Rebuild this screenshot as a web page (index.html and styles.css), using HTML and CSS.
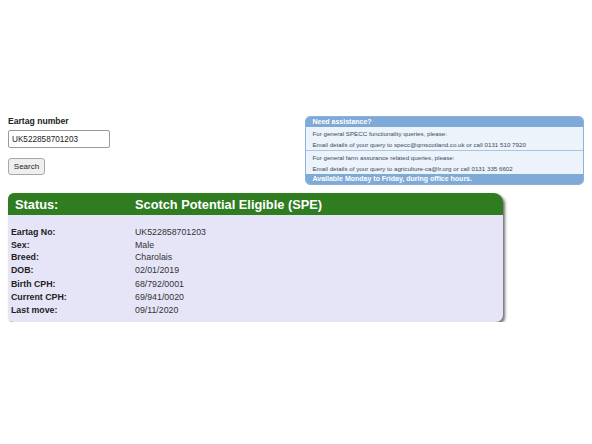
FILE: index.html
```html
<!DOCTYPE html>
<html>
<head>
<meta charset="utf-8">
<link rel="stylesheet" href="styles.css">
</head>
<body>
<div class="page">
  <div class="top">
    <form class="search">
      <label class="lbl">Eartag number</label>
      <input class="inp" type="text" value="UK522858701203">
      <button class="btn" type="button">Search</button>
    </form>
    <div class="help">
      <div class="help-head">Need assistance?</div>
      <div class="help-sec">
        <p>For general SPECC functionality queries, please:</p>
        <p>Email details of your query to specc@qmscotland.co.uk or call 0131 510 7920</p>
      </div>
      <div class="help-sec">
        <p>For general farm assurance related queries, please:</p>
        <p>Email details of your query to agriculture-ca@lr.org or call 0131 335 6602</p>
      </div>
      <div class="help-foot">Available Monday to Friday, during office hours.</div>
    </div>
  </div>
  <div class="card">
    <div class="card-head">
      <span class="k">Status:</span>
      <span class="v">Scotch Potential Eligible (SPE)</span>
    </div>
    <div class="card-body">
      <div class="row"><span class="k">Eartag No:</span><span class="v">UK522858701203</span></div>
      <div class="row"><span class="k">Sex:</span><span class="v">Male</span></div>
      <div class="row"><span class="k">Breed:</span><span class="v">Charolais</span></div>
      <div class="row"><span class="k">DOB:</span><span class="v">02/01/2019</span></div>
      <div class="row cph first"><span class="k">Birth CPH:</span><span class="v">68/792/0001</span></div>
      <div class="row cph"><span class="k">Current CPH:</span><span class="v">69/941/0020</span></div>
      <div class="row last"><span class="k">Last move:</span><span class="v">09/11/2020</span></div>
    </div>
  </div>
</div>
</body>
</html>
```
FILE: styles.css
```css
html, body {
  margin: 0;
  padding: 0;
  background: #ffffff;
}
body {
  font-family: "Liberation Sans", Arial, sans-serif;
  color: #222;
}
.page {
  padding: 113px 8px 0 8px;
}
.top {
  display: flex;
  align-items: flex-start;
}
.search {
  display: flex;
  flex-direction: column;
  align-items: flex-start;
  width: 298px;
  margin: 0;
}
.lbl {
  font-size: 8.6px;
  font-weight: bold;
  color: #222;
  line-height: 12px;
  margin-top: 2px;
}
.inp {
  margin-top: 3px;
  width: 102px;
  height: 18px;
  box-sizing: border-box;
  border: 1px solid #9a9a9a;
  border-radius: 2px;
  font-family: "Liberation Sans", Arial, sans-serif;
  font-size: 8.2px;
  padding: 0 3px;
  color: #222;
}
.btn {
  margin-top: 10px;
  width: 37px;
  height: 17px;
  box-sizing: border-box;
  border: 1px solid #a8a8a8;
  border-radius: 3px;
  background: #efefef;
  font-family: "Liberation Sans", Arial, sans-serif;
  font-size: 8px;
  padding: 0;
  color: #222;
}
.help {
  margin-top: 3px;
  width: 277px;
  border-radius: 5px;
  background: #ecf3fa;
  border: 1px solid #8db2d9;
  overflow: hidden;
  font-size: 6.2px;
  color: #3a4a5e;
}
.help-head {
  background: #7fa9d6;
  color: #fff;
  font-weight: bold;
  font-size: 7px;
  line-height: 10px;
  padding: 0 6px;
}
.help-sec {
  padding: 1px 6px 0 6px;
}
.help-sec + .help-sec {
  border-top: 1px solid #a6c4e4;
}
.help-sec p {
  margin: 0;
  line-height: 11px;
}
.help-foot {
  background: #7fa9d6;
  color: #fff;
  font-weight: bold;
  font-size: 7px;
  line-height: 10px;
  padding: 0 6px;
}
.card {
  margin-top: 8px;
  width: 495px;
  border-radius: 6px 9px 7px 6px;
  background: #e6e5f8;
  box-shadow: 2px 2px 3px #6e6e6e;
  overflow: hidden;
}
.card-head {
  display: flex;
  background: #307d21;
  color: #fff;
  font-weight: bold;
  font-size: 12.8px;
  height: 22px;
  align-items: center;
  padding-left: 7px;
}
.card-head .k {
  width: 120px;
}
.card-body {
  padding: 11px 0 5px 3px;
  font-size: 8.8px;
}
.row {
  display: flex;
  line-height: 12.5px;
}
.row .k {
  width: 124px;
  font-weight: bold;
  color: #222;
}
.row .v {
  color: #333;
}
.row.first {
  margin-top: 2px;
}
.row.last {
  margin-top: 1px;
}
```
